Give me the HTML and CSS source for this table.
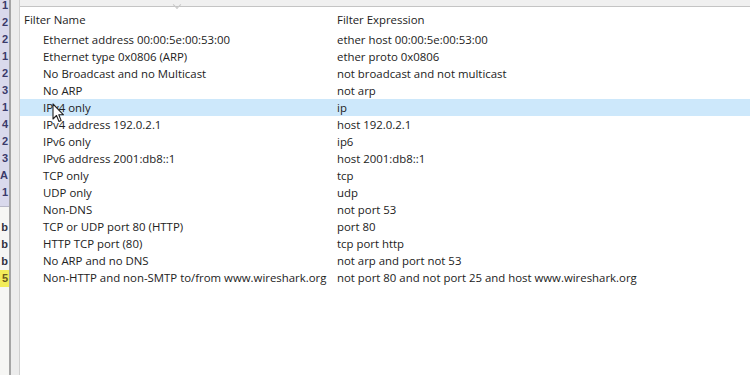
FILE: index.html
```html
<!DOCTYPE html>
<html>
<head>
<meta charset="utf-8">
<link rel="stylesheet" href="styles.css">
</head>
<body>
<div class="app">
  <div class="strip">
    <div class="strip-top">
      <span>1</span><span>2</span><span>2</span><span>1</span><span>2</span><span>3</span><span>1</span><span>4</span><span>2</span><span>3</span><span>A</span><span>1</span>
    </div>
    <div class="strip-sep"></div>
    <div class="strip-bottom">
      <span>b</span><span>b</span><span>b</span><span class="hl">5</span>
    </div>
  </div>
  <div class="gutter"></div>
  <div class="main">
    <div class="topband"><span class="chev"></span></div>
    <div class="panel">
      <div class="row head"><div class="c1">Filter Name</div><div class="c2">Filter Expression</div></div>
      <div class="row"><div class="c1">Ethernet address 00:00:5e:00:53:00</div><div class="c2">ether host 00:00:5e:00:53:00</div></div>
      <div class="row"><div class="c1">Ethernet type 0x0806 (ARP)</div><div class="c2">ether proto 0x0806</div></div>
      <div class="row"><div class="c1">No Broadcast and no Multicast</div><div class="c2">not broadcast and not multicast</div></div>
      <div class="row"><div class="c1">No ARP</div><div class="c2">not arp</div></div>
      <div class="row sel"><div class="c1">IPv4 only</div><div class="c2">ip</div></div>
      <div class="row"><div class="c1">IPv4 address 192.0.2.1</div><div class="c2">host 192.0.2.1</div></div>
      <div class="row"><div class="c1">IPv6 only</div><div class="c2">ip6</div></div>
      <div class="row"><div class="c1">IPv6 address 2001:db8::1</div><div class="c2">host 2001:db8::1</div></div>
      <div class="row"><div class="c1">TCP only</div><div class="c2">tcp</div></div>
      <div class="row"><div class="c1">UDP only</div><div class="c2">udp</div></div>
      <div class="row"><div class="c1">Non-DNS</div><div class="c2">not port 53</div></div>
      <div class="row"><div class="c1">TCP or UDP port 80 (HTTP)</div><div class="c2">port 80</div></div>
      <div class="row"><div class="c1">HTTP TCP port (80)</div><div class="c2">tcp port http</div></div>
      <div class="row"><div class="c1">No ARP and no DNS</div><div class="c2">not arp and port not 53</div></div>
      <div class="row"><div class="c1">Non-HTTP and non-SMTP to/from www.wireshark.org</div><div class="c2">not port 80 and not port 25 and host www.wireshark.org</div></div>
    </div>
  </div>
</div>
<svg class="cursor" width="13" height="20" viewBox="0 0 13 20"><path d="M1 1 L1 16 L4.5 12.5 L7 18.5 L9.2 17.6 L6.8 11.8 L11.5 11.8 Z" fill="#fff" stroke="#222" stroke-width="1.1" stroke-linejoin="round"/></svg>
</body>
</html>
```
FILE: styles.css
```css
html, body {
  margin: 0;
  padding: 0;
  width: 750px;
  height: 375px;
  overflow: hidden;
  background: #fff;
  font-family: "Open Sans", "Noto Sans", sans-serif;
  font-size: 11.4px;
  color: #222;
}
.app {
  display: flex;
  height: 375px;
}
.strip {
  width: 9px;
  display: flex;
  flex-direction: column;
  overflow: hidden;
  background: #f6f6f4;
}
.strip-top {
  background: #d9d9ec;
  display: flex;
  flex-direction: column;
  margin-top: -3px;
  padding-bottom: 5px;
}
.strip span {
  height: 17px;
  line-height: 17px;
  font-family: "Liberation Sans", sans-serif;
  font-weight: bold;
  font-size: 11px;
  color: #3a3a6a;
  text-align: right;
  padding-right: 1px;
}
.strip-sep {
  height: 1px;
  background: #b8b8c8;
  margin-bottom: 12px;
}
.strip-bottom {
  display: flex;
  flex-direction: column;
}
.strip-bottom span {
  color: #303040;
}
.strip-bottom .hl {
  background: #f2ec5a;
  color: #6a5a20;
}
.gutter {
  width: 11px;
  background: #ececec;
  border-left: 2px solid #a4a4a4;
  border-right: 1px solid #cfcfcf;
  box-sizing: border-box;
}
.main {
  flex: 1;
  display: flex;
  flex-direction: column;
}
.topband {
  height: 6px;
  background: #f0f0f0;
  border-bottom: 1px solid #c4c4c4;
  position: relative;
}
.chev {
  position: absolute;
  left: 154px;
  top: 6px;
  width: 5px;
  height: 5px;
  border-right: 1px solid #c8c8c8;
  border-bottom: 1px solid #c8c8c8;
  transform: rotate(45deg) translate(-3px, -3px);
}
.panel {
  flex: 1;
  background: #fff;
}
.row {
  display: flex;
  height: 17px;
  line-height: 17px;
  white-space: nowrap;
}
.row.head {
  height: 24px;
  line-height: 25px;
}
.c1 {
  width: 317px;
  box-sizing: border-box;
  padding-left: 23px;
}
.head .c1 {
  padding-left: 4px;
}
.c2 {
  flex: 1;
}
.row.sel {
  background: #cde8fb;
}
.cursor {
  position: absolute;
  left: 52px;
  top: 103px;
}
```
